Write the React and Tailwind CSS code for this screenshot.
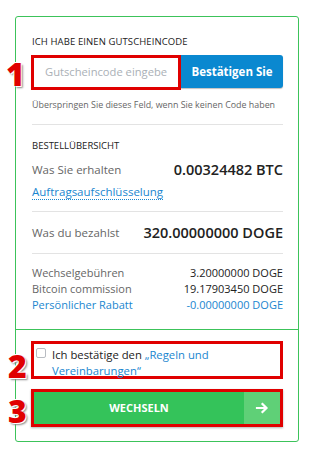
import React from "react"

function Marker({ n, className }) {
  return (
    <span
      className={
        "absolute text-[32px] font-extrabold leading-none text-[#e00000] [text-shadow:-1px_-1px_0_#fff,1px_1px_0_#fff,2px_2px_2px_#888] " +
        className
      }
    >
      {n}
    </span>
  )
}

function Row({ label, value, blue }) {
  return (
    <div className="flex items-center justify-between h-[16px]">
      <span className={blue ? "text-[#1a86cf]" : "text-[#666]"}>{label}</span>
      <span className={blue ? "text-[#1a86cf]" : "text-[#222]"}>{value}</span>
    </div>
  )
}

export default function App() {
  return (
    <div className="relative w-[309px] h-[457px] bg-white pt-4 pl-[15px] font-['Open_Sans',sans-serif]">
      <div className="w-[284px] border border-[#3cc35a] rounded-[3px]">
        <div className="pl-4 pr-[15px] pt-[18px] pb-[16px]">
          <div className="text-[9.5px] leading-[14px] text-[#222] tracking-[0.1px]">ICH HABE EINEN GUTSCHEINCODE</div>

          <div className="relative mt-[6px] flex h-[35px] -ml-px">
            <Marker n="1" className="-left-[25px] top-[3px]" />
            <div className="w-[150px] border-[3px] border-[#e00000] bg-white flex items-center pl-[11px] overflow-hidden">
              <span className="text-[11.2px] text-[#aab0b6] whitespace-nowrap">Gutscheincode eingebe</span>
            </div>
            <button className="flex-1 h-[33px] bg-[#0a88d0] rounded-r-[3px] text-white font-bold text-[11.5px] shadow-[0_1px_1px_rgba(0,0,0,0.25)]">
              Bestätigen Sie
            </button>
          </div>

          <div className="mt-[8px] text-[8.9px] leading-[13px] text-[#666] whitespace-nowrap">
            Überspringen Sie dieses Feld, wenn Sie keinen Code haben
          </div>

          <div className="mt-[13px] border-t border-[#e3e3e3]" />

          <div className="mt-[14px] text-[9.5px] leading-[14px] text-[#222]">BESTELLÜBERSICHT</div>
          <div className="mt-[8px] flex items-center justify-between h-[18px]">
            <span className="text-[11.5px] text-[#666]">Was Sie erhalten</span>
            <span className="text-[14.5px] font-semibold text-[#222]">0.00324482 BTC</span>
          </div>
          <div className="mt-[4px] h-[18px] flex items-center">
            <span className="text-[11.5px] text-[#1a86cf] border-b border-dotted border-[#1a86cf] leading-[15px]">
              Auftragsaufschlüsselung
            </span>
          </div>

          <div className="mt-[10px] border-t border-[#e3e3e3]" />

          <div className="mt-[12px] flex items-center justify-between h-[18px]">
            <span className="text-[11.5px] text-[#666]">Was du bezahlst</span>
            <span className="text-[14.5px] font-semibold text-[#222]">320.00000000 DOGE</span>
          </div>

          <div className="mt-[11px] border-t border-[#e3e3e3]" />

          <div className="mt-[11px] text-[11px]">
            <Row label="Wechselgebühren" value="3.20000000 DOGE" />
            <Row label="Bitcoin commission" value="19.17903450 DOGE" />
            <Row label="Persönlicher Rabatt" value="-0.00000000 DOGE" blue />
          </div>
        </div>

        <div className="border-t border-[#3cc35a] pl-4 pr-[15px] pt-[11px] pb-[14px]">
          <div className="relative -ml-px h-[38px] border-[3px] border-[#e00000] flex items-start pl-[2px] pt-[3px]">
            <Marker n="2" className="-left-[26px] top-[6px]" />
            <span className="mt-[1px] w-[10px] h-[10px] border border-[#b8bcc2] rounded-[2px] bg-white shrink-0" />
            <span className="ml-[6px] text-[11.3px] leading-[16px] text-[#222]">
              Ich bestätige den <span className="text-[#1a86cf]">„Regeln und Vereinbarungen“</span>
            </span>
          </div>

          <div className="relative -ml-px mt-[10px] h-[38px] border-[3px] border-[#e00000] flex shadow-[0_1px_2px_rgba(0,0,0,0.3)]">
            <Marker n="3" className="-left-[26px] top-[3px]" />
            <div className="flex-1 bg-[#34c35a] flex items-center justify-center text-white font-bold text-[11px]">
              WECHSELN
            </div>
            <div className="w-[36px] bg-[#5fd077] flex items-center justify-center">
              <svg width="14" height="14" viewBox="0 0 14 14" fill="none" stroke="#fff" strokeWidth="2.2" strokeLinecap="square">
                <path d="M2 7h9M7.5 3l4 4-4 4" />
              </svg>
            </div>
          </div>
        </div>
      </div>
    </div>
  )
}
